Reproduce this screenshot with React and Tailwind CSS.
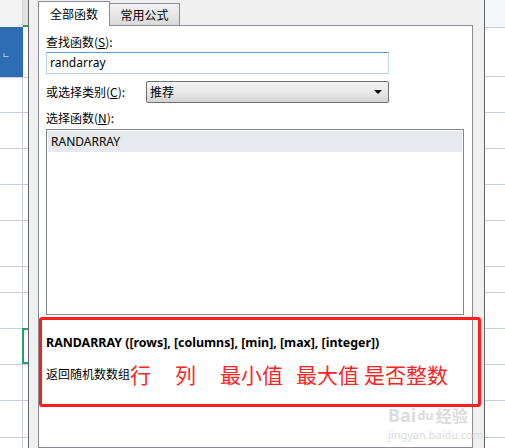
import React from 'react';

const UI_FONT = { fontFamily: '"Noto Sans", "Noto Sans CJK SC", sans-serif' };
const CJK_FONT = { fontFamily: '"Noto Sans CJK SC", "Noto Sans", sans-serif' };

// row heights of the sheets peeking out on both sides
const leftRows = [35, 36, 36, 36, 46, 26, 36, 36, 36, 37, 11];
const rightRows = [49, 36, 36, 36, 36, 46, 26, 36, 36, 36, 37, 11];

const LeftSheet = () => (
    <div className="w-[28px] flex flex-col shrink-0 bg-white">
        <div className="flex h-[27px]">
            <div className="w-[23px] bg-[#f3f3f3] border-r border-[#d4d4d4]" />
            <div className="flex-1 bg-[#e1e1e1] border-b-2 border-[#21a366]" />
        </div>
        <div className="flex h-[50px]">
            <div className="w-[23px] bg-[#2e6db4] flex items-center">
                <span className="text-white text-[8px] leading-none ml-[2px] mt-[6px]">ㄴ</span>
            </div>
            <div className="flex-1 bg-white" />
        </div>
        {leftRows.map((h, i) => (
            <div key={i} className="flex border-t border-[#c8cde0]" style={{ height: h }}>
                <div className="w-[23px] border-r border-[#c8cde0]" />
                <div className={i === 7 ? 'flex-1 border-2 border-r-0 border-[#21a366] -mt-px -ml-px' : 'flex-1'} />
            </div>
        ))}
    </div>
);

const RightSheet = () => (
    <div className="flex-1 flex flex-col bg-white">
        <div className="h-[27px] bg-[#f4f6f8]" />
        {rightRows.map((h, i) => (
            <div key={i} className="border-t border-[#c8cde0]" style={{ height: h }} />
        ))}
    </div>
);

const Dialog = () => (
    <div className="w-[457px] shrink-0 bg-[#f0f0f0] border-x border-[#626468] flex flex-col pl-[9px] pr-[11px]" style={CJK_FONT}>
        {/* tabs */}
        <div className="flex h-[25px] items-end text-[12px] text-black">
            <div className="w-[72px] h-[25px] bg-white border border-b-0 border-[#898c95] flex items-center justify-center -mb-px relative z-10">
                全部函数
            </div>
            <div className="w-[70px] h-[22px] bg-linear-to-b from-[#f3f3f3] to-[#dadada] border border-l-0 border-b-0 border-[#898c95] flex items-center justify-center">
                常用公式
            </div>
        </div>

        {/* tab panel */}
        <div className="flex-1 bg-white border border-[#898c95] px-[7px] pt-[8px]">
            <div className="text-[12px] leading-[16px] text-black">
                查找函数(<u>S</u>):
            </div>
            <div className="mt-[2px] w-[343px] h-[22px] border border-[#b9d3ec] border-t-[#5b9bd0] flex items-center pl-[3px] text-[12px] text-black" style={UI_FONT}>
                randarray
            </div>
            <div className="mt-[7px] flex items-center h-[22px]">
                <div className="w-[100px] text-[12px] text-black">
                    或选择类别(<u>C</u>):
                </div>
                <div className="w-[243px] h-[22px] rounded-[2px] border border-[#707070] bg-linear-to-b from-[#f4f4f4] via-[#e9e9e9] to-[#d4d4d4] flex items-center justify-between pl-[3px] pr-[6px] text-[12px] text-black">
                    <span>推荐</span>
                    <span className="w-0 h-0 border-x-[4px] border-x-transparent border-t-[4px] border-t-black" />
                </div>
            </div>
            <div className="mt-[7px] text-[12px] leading-[16px] text-black">
                选择函数(<u>N</u>):
            </div>
            <div className="mt-[3px] w-[418px] h-[186px] border border-[#828790] p-px">
                <div className="h-[21px] bg-[#e6e9ee] flex items-center pl-[3px] text-[12px] text-black" style={UI_FONT}>
                    RANDARRAY
                </div>
            </div>
        </div>
    </div>
);

const Annotation = () => (
    <div className="absolute left-[39px] top-[317px] w-[442px] h-[90px] border-[3px] border-[#fe1c1c] rounded-[3px] pl-[4px] pt-[15px]">
        <div className="text-[12.4px] leading-[16px] font-bold text-black" style={UI_FONT}>
            RANDARRAY ([rows], [columns], [min], [max], [integer])
        </div>
        <div className="mt-[11px] flex items-center h-[24px]" style={CJK_FONT}>
            <span className="text-[12px] text-black w-[84px]">返回随机数数组</span>
            <span className="text-[21px] leading-[24px] text-[#ff2424]">行</span>
            <span className="text-[21px] leading-[24px] text-[#ff2424] ml-[24px]">列</span>
            <span className="text-[21px] leading-[24px] text-[#ff2424] ml-[24px]">最小值</span>
            <span className="text-[21px] leading-[24px] text-[#ff2424] ml-[13px]">最大值</span>
            <span className="text-[21px] leading-[24px] text-[#ff2424] ml-[5px]">是否整数</span>
        </div>
    </div>
);

const Watermark = () => (
    <div className="absolute left-[388px] top-[406px] flex flex-col text-[#dcdcdc] select-none" style={UI_FONT}>
        <div className="flex items-end h-[18px] leading-[18px]">
            <span className="text-[18px] font-bold">Bai</span>
            <span className="text-[13px] font-bold ml-px">du</span>
            <span className="text-[16px] font-bold ml-[2px]" style={CJK_FONT}>经验</span>
        </div>
        <div className="text-[11px] leading-[12px] mt-[5px]">jingyan.baidu.com</div>
    </div>
);

const App = () => {
    return (
        <div className="relative w-[505px] h-[448px] overflow-hidden flex bg-white">
            <LeftSheet />
            <Dialog />
            <RightSheet />
            <Annotation />
            <Watermark />
        </div>
    );
};

export default App;
